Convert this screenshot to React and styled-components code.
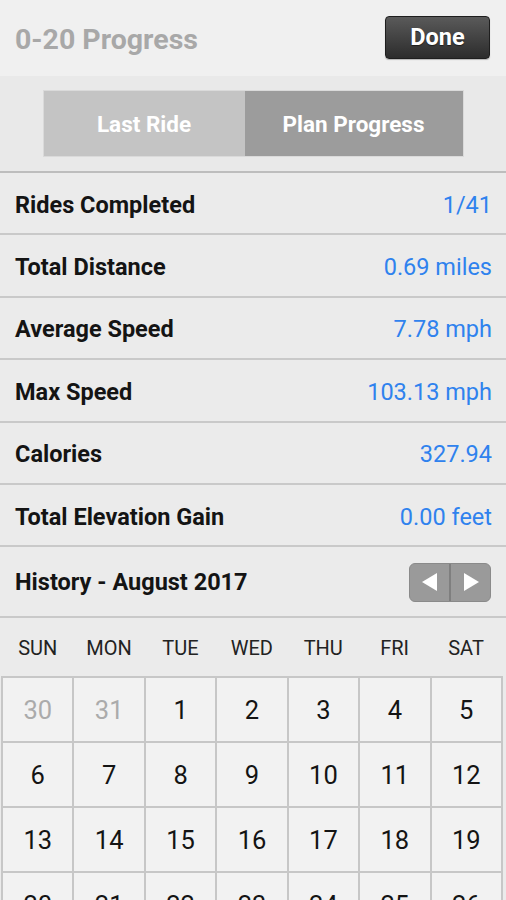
import React from "react";
import styled, { createGlobalStyle } from "styled-components";

const Global = createGlobalStyle`
  html, body { margin: 0; padding: 0; background: #ebebeb; }
  body { font-family: Roboto, "Noto Sans", "Liberation Sans", sans-serif; }
  * { box-sizing: border-box; }
`;

const Page = styled.div`
  width: 506px;
  height: 900px;
  overflow: hidden;
  background: #ebebeb;
`;

const Header = styled.div`
  height: 76px;
  background: #f0f0f0;
  display: flex;
  align-items: center;
  justify-content: space-between;
  padding: 0 16px 0 15px;
`;

const Title = styled.div`
  font-size: 28.5px;
  font-weight: 700;
  color: #a8a8a8;
  margin-top: 3px;
`;

const DoneButton = styled.button`
  width: 105px;
  height: 43px;
  margin-top: -2px;
  padding: 0;
  border: 1px solid #1e1e1e;
  border-radius: 4px;
  background: linear-gradient(#5a5a5a, #2c2c2c);
  color: #fff;
  font-family: inherit;
  font-size: 23.5px;
  font-weight: 700;
  box-shadow: 0 1px 1px rgba(0,0,0,0.25);
  text-shadow: 0 1px 1px rgba(0,0,0,0.5);
`;

const SegmentZone = styled.div`
  height: 97px;
  background: #e9e9e9;
  display: flex;
  justify-content: center;
  padding-top: 14px;
  border-bottom: 2px solid #bdbdbd;
`;

const Segment = styled.div`
  display: flex;
  width: 421px;
  height: 67px;
  border: 1px solid #dadada;
`;

const SegButton = styled.div`
  width: ${(p) => p.w}px;
  background: ${(p) => (p.active ? "#9c9c9c" : "#c4c4c4")};
  color: #fff;
  font-size: 22.5px;
  font-weight: 700;
  display: flex;
  align-items: center;
  justify-content: center;
`;

const StatRow = styled.div`
  height: ${(p) => p.h || 62.4}px;
  display: flex;
  align-items: center;
  justify-content: space-between;
  padding: ${(p) => p.pt ?? 3}px 14px 0 15px;
  border-bottom: 2px solid #c9c9c9;
  background: #ebebeb;
`;

const Label = styled.div`
  font-size: 23.5px;
  font-weight: 700;
  color: #141414;
`;

const Value = styled.div`
  font-size: 23.5px;
  color: #2f82ee;
`;

const HistoryTitle = styled.div`
  font-size: 23.5px;
  font-weight: 700;
  color: #141414;
`;

const NavGroup = styled.div`
  display: flex;
  width: 82px;
  height: 39px;
  border-radius: 6px;
  background: #9a9a9a;
  border: 1px solid #8a8a8a;
  overflow: hidden;
  margin-right: 1px;
`;

const NavButton = styled.div`
  flex: 1;
  display: flex;
  align-items: center;
  justify-content: center;
  & + & { border-left: 2px solid #7f7f7f; }
`;

const DayHeader = styled.div`
  height: 58px;
  display: grid;
  grid-template-columns: repeat(7, 71.4px);
  padding-left: 2px;
  align-items: center;
`;

const DayName = styled.div`
  text-align: center;
  font-size: 20px;
  color: #222;
  padding-top: 2px;
`;

const Grid = styled.div`
  width: 502px;
  margin-left: 1px;
  display: grid;
  grid-template-columns: repeat(7, 1fr);
  grid-auto-rows: 63px;
  gap: 2px;
  padding: 2px;
  background: #c7c7c7;
`;

const Cell = styled.div`
  background: #f2f2f2;
  display: flex;
  align-items: center;
  justify-content: center;
  font-size: 25.5px;
  color: ${(p) => (p.faded ? "#ababab" : "#141414")};
`;

const Tri = ({ dir }) => (
  <svg width="18" height="20" viewBox="0 0 18 20">
    {dir === "left" ? (
      <polygon points="16,1 16,19 1,10" fill="#fff" />
    ) : (
      <polygon points="2,1 2,19 17,10" fill="#fff" />
    )}
  </svg>
);

const stats = [
  ["Rides Completed", "1/41"],
  ["Total Distance", "0.69 miles"],
  ["Average Speed", "7.78 mph"],
  ["Max Speed", "103.13 mph"],
  ["Calories", "327.94"],
  ["Total Elevation Gain", "0.00 feet"],
];

const days = ["SUN", "MON", "TUE", "WED", "THU", "FRI", "SAT"];

const cells = [
  { n: 30, f: true },
  { n: 31, f: true },
  ...Array.from({ length: 26 }, (_, i) => ({ n: i + 1 })),
];

export default function App() {
  return (
    <Page>
      <Global />
      <Header>
        <Title>0-20 Progress</Title>
        <DoneButton>Done</DoneButton>
      </Header>
      <SegmentZone>
        <Segment>
          <SegButton w={202}>Last Ride</SegButton>
          <SegButton w={219} active>Plan Progress</SegButton>
        </Segment>
      </SegmentZone>
      {stats.map(([l, v]) => (
        <StatRow key={l}>
          <Label>{l}</Label>
          <Value>{v}</Value>
        </StatRow>
      ))}
      <StatRow h={71} pt={1}>
        <HistoryTitle>History - August 2017</HistoryTitle>
        <NavGroup>
          <NavButton><Tri dir="left" /></NavButton>
          <NavButton><Tri dir="right" /></NavButton>
        </NavGroup>
      </StatRow>
      <DayHeader>
        {days.map((d) => (
          <DayName key={d}>{d}</DayName>
        ))}
      </DayHeader>
      <Grid>
        {cells.map((c, i) => (
          <Cell key={i} faded={c.f}>{c.n}</Cell>
        ))}
      </Grid>
    </Page>
  );
}
